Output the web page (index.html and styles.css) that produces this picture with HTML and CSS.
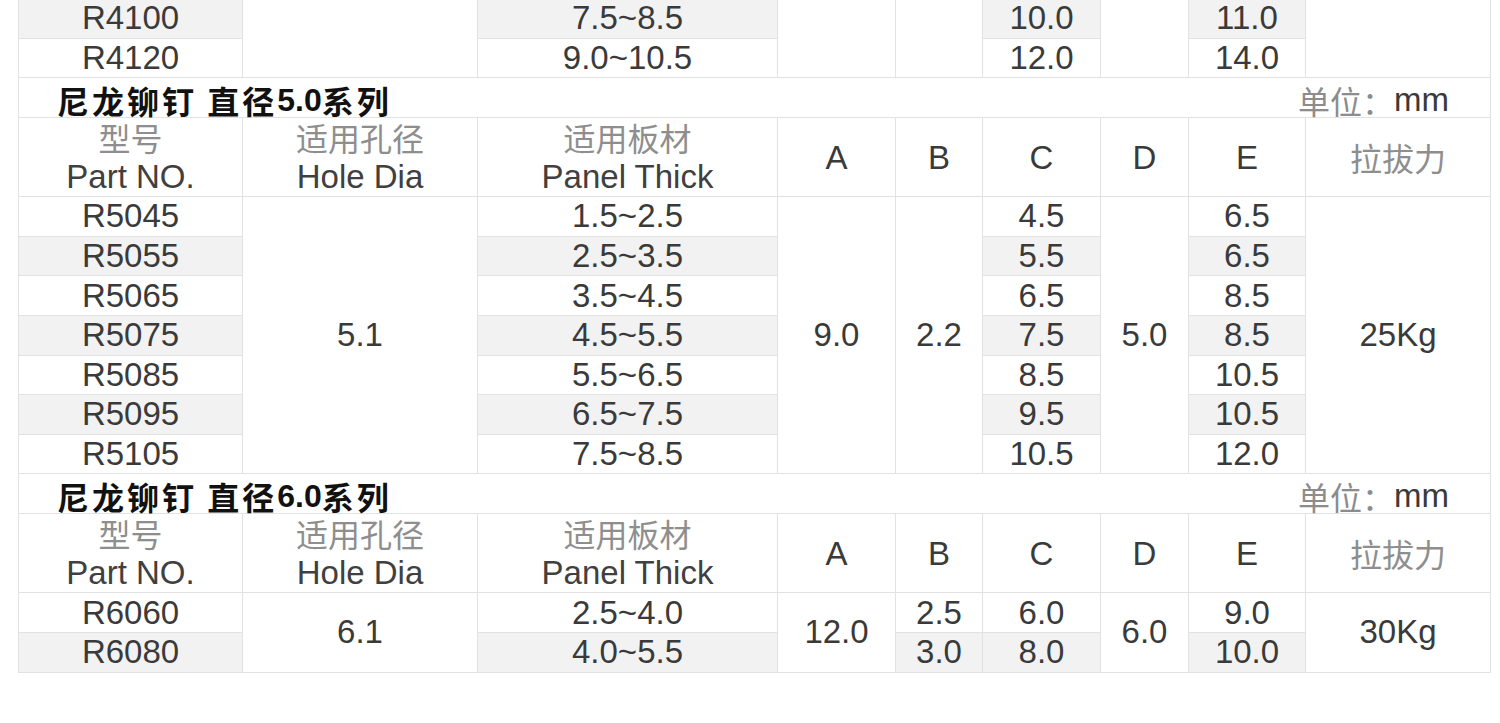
FILE: index.html
```html
<!DOCTYPE html>
<html lang="zh">
<head>
<meta charset="utf-8">
<title>尼龙铆钉规格表</title>
<link rel="stylesheet" href="styles.css">
</head>
<body>
<table class="spec">
  <colgroup>
    <col class="c-part"><col class="c-hole"><col class="c-panel"><col class="c-a"><col class="c-b"><col class="c-c"><col class="c-d"><col class="c-e"><col class="c-f">
  </colgroup>
  <tbody>
    <tr class="row first">
      <td class="sh">R4100</td><td rowspan="2"></td><td class="sh">7.5~8.5</td><td rowspan="2"></td><td rowspan="2"></td><td class="sh">10.0</td><td rowspan="2"></td><td class="sh">11.0</td><td rowspan="2"></td>
    </tr>
    <tr class="row">
      <td>R4120</td><td>9.0~10.5</td><td>12.0</td><td>14.0</td>
    </tr>

    <tr class="title">
      <td colspan="9"><div class="title-in"><span class="tname">尼龙铆钉 直径<b>5.0</b>系列</span><span class="unit"><span class="unit-zh">单位：</span>mm</span></div></td>
    </tr>
    <tr class="head">
      <td><span class="zh">型号</span><span class="en">Part NO.</span></td>
      <td><span class="zh">适用孔径</span><span class="en">Hole Dia</span></td>
      <td><span class="zh">适用板材</span><span class="en">Panel Thick</span></td>
      <td>A</td><td>B</td><td>C</td><td>D</td><td>E</td>
      <td><span class="zh">拉拔力</span></td>
    </tr>
    <tr class="row">
      <td>R5045</td><td rowspan="7">5.1</td><td>1.5~2.5</td><td rowspan="7">9.0</td><td rowspan="7">2.2</td><td>4.5</td><td rowspan="7">5.0</td><td>6.5</td><td rowspan="7">25Kg</td>
    </tr>
    <tr class="row"><td class="sh">R5055</td><td class="sh">2.5~3.5</td><td class="sh">5.5</td><td class="sh">6.5</td></tr>
    <tr class="row"><td>R5065</td><td>3.5~4.5</td><td>6.5</td><td>8.5</td></tr>
    <tr class="row"><td class="sh">R5075</td><td class="sh">4.5~5.5</td><td class="sh">7.5</td><td class="sh">8.5</td></tr>
    <tr class="row"><td>R5085</td><td>5.5~6.5</td><td>8.5</td><td>10.5</td></tr>
    <tr class="row"><td class="sh">R5095</td><td class="sh">6.5~7.5</td><td class="sh">9.5</td><td class="sh">10.5</td></tr>
    <tr class="row"><td>R5105</td><td>7.5~8.5</td><td>10.5</td><td>12.0</td></tr>

    <tr class="title">
      <td colspan="9"><div class="title-in"><span class="tname">尼龙铆钉 直径<b>6.0</b>系列</span><span class="unit"><span class="unit-zh">单位：</span>mm</span></div></td>
    </tr>
    <tr class="head">
      <td><span class="zh">型号</span><span class="en">Part NO.</span></td>
      <td><span class="zh">适用孔径</span><span class="en">Hole Dia</span></td>
      <td><span class="zh">适用板材</span><span class="en">Panel Thick</span></td>
      <td>A</td><td>B</td><td>C</td><td>D</td><td>E</td>
      <td><span class="zh">拉拔力</span></td>
    </tr>
    <tr class="row">
      <td>R6060</td><td rowspan="2">6.1</td><td>2.5~4.0</td><td rowspan="2">12.0</td><td>2.5</td><td>6.0</td><td rowspan="2">6.0</td><td>9.0</td><td rowspan="2">30Kg</td>
    </tr>
    <tr class="row"><td class="sh">R6080</td><td class="sh">4.0~5.5</td><td class="sh">3.0</td><td class="sh">8.0</td><td class="sh">10.0</td></tr>
  </tbody>
</table>
</body>
</html>
```
FILE: styles.css
```css
html, body {
  margin: 0;
  padding: 0;
  background: #ffffff;
}

body {
  overflow: hidden;
}

.spec {
  margin: -2px 0 0 18px;
  width: 1472px;
  table-layout: fixed;
  border-collapse: collapse;
  font-family: "Liberation Sans", Arial, sans-serif;
  font-size: 33px;
  color: #3a3a3a;
}

.c-part { width: 224px; }
.c-hole { width: 235px; }
.c-panel { width: 300px; }
.c-a { width: 118px; }
.c-b { width: 87px; }
.c-c { width: 118px; }
.c-d { width: 88px; }
.c-e { width: 117px; }
.c-f { width: 185px; }

.spec td {
  border: 1px solid #e2e2e2;
  padding: 0;
  text-align: center;
  vertical-align: middle;
  line-height: 36px;
  white-space: nowrap;
}

.row td {
  height: 38.6px;
}

.spec td.sh {
  background: #f2f2f2;
}

.title td {
  height: 39px;
  text-align: left;
}

.title-in {
  box-sizing: border-box;
  height: 39px;
  display: flex;
  justify-content: space-between;
  align-items: center;
  padding: 4px 41px 0 38px;
}

.tname,
.unit {
  display: block;
  height: 34px;
  line-height: 34px;
}

.tname {
  font-family: "Noto Sans CJK SC", sans-serif;
  font-weight: 700;
  font-size: 32px;
  color: #111111;
  letter-spacing: 3px;
}

.tname b {
  font-family: "Liberation Sans", Arial, sans-serif;
  font-weight: 700;
  font-size: 32px;
  letter-spacing: 0;
  vertical-align: top;
}

.unit {
  font-size: 33px;
  color: #3a3a3a;
}

.unit-zh {
  font-family: "Noto Sans CJK SC", sans-serif;
  font-size: 32px;
  color: #8c8c8c;
  font-weight: 400;
  vertical-align: top;
}

.head td {
  height: 78px;
  line-height: 39px;
}

.head .zh,
.head .en {
  display: block;
  height: 39px;
  line-height: 39px;
}

.head td > .zh:only-child {
  height: auto;
}

.head .zh {
  font-family: "Noto Sans CJK SC", sans-serif;
  font-size: 32px;
  color: #8e8e8e;
  font-weight: 400;
}

.head .en {
  color: #404040;
}
```
